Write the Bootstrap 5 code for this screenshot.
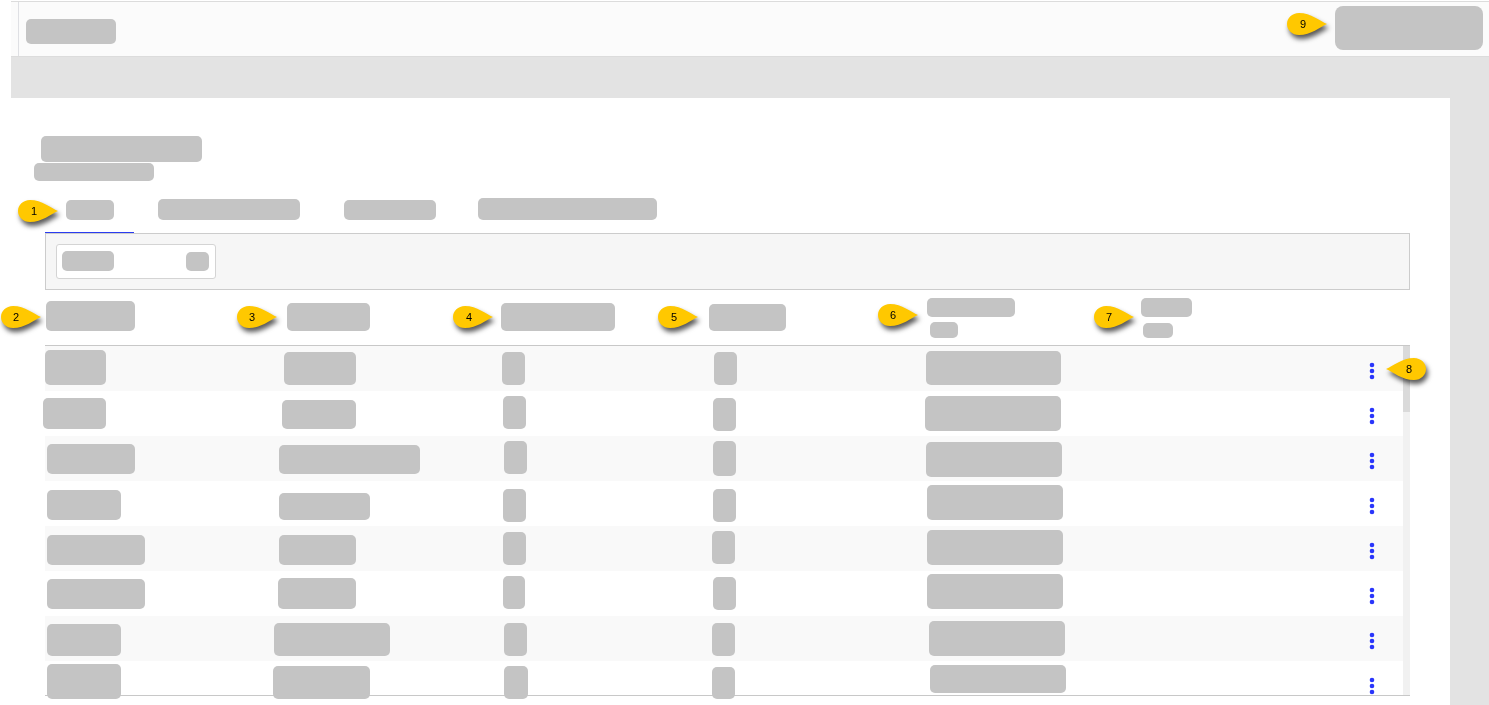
<!DOCTYPE html>
<html lang="en">
<head>
<meta charset="utf-8">
<title>Annotated list page</title>
<link href="https://cdn.jsdelivr.net/npm/bootstrap@5.3.0/dist/css/bootstrap.min.css" rel="stylesheet">
<style>
html,body{height:705px;overflow:hidden;background:#fff}
body{position:relative;padding-top:1px;font-family:"Liberation Sans",Arial,sans-serif}
.shell{margin-left:11px}
.ph{background:#c4c4c4;border-radius:5px;display:block;flex:none}
.topbar{height:56px;background:#fbfbfb;border-top:1px solid #dcdcdc;border-bottom:1px solid #dcdcdc}
.gutter{width:8px;align-self:stretch;border-right:1px solid #dfe0e4}
.brand{width:90px;height:25px;margin:17px 0 0 7px}
.account{width:148px;height:44px;margin:4px 6px 0 auto;border-radius:8px}
.band{height:41px;background:#e3e3e3}
.rail{width:39px;background:#e3e3e3;height:607px}
.sheet{width:1439px;height:607px;padding:38px 40px 0 34px;background:#fff}
.title{width:161px;height:26px;margin-left:-4px}
.subtitle{width:120px;height:18px;margin:1px 0 0 -11px}
.tabstrip{height:52px}
.tabstrip .nav-link{padding:0 0 12px;border-bottom:1px solid transparent}
.tabstrip .active-tab{padding:0 20px 12px 21px;border-bottom-color:#2a3cf0}
.tabstrip .nav-item+.nav-item{margin-left:44px}
.tabstrip .nav-item:nth-child(2){margin-left:24px}
.tabstrip .nav-item:nth-child(4){margin-left:42px}
.t1{width:48px;height:20px}
.t2{width:142px;height:21px}
.t3{width:92px;height:20px}
.t4{width:179px;height:22px}
.filterbar{height:57px;padding:10px;background:#f6f6f6;border:1px solid #ccc}
.filterbox{width:160px;height:35px;background:#fff;border:1px solid #d4d4d4;border-radius:3px}
.f1{width:52px;height:20px;margin:6px 0 0 5px}
.f2{width:23px;height:19px;margin:7px 6px 0 auto}
.headrow{display:grid;grid-template-columns:225px 230px 210px 210px 220px 1fr;height:56px;border-bottom:1px solid #c8c8c8;align-items:start}
.h1{width:89px;height:30px;margin:11px 0 0 1px}
.h2{width:83px;height:28px;margin:13px 0 0 17px}
.h3{width:114px;height:28px;margin:13px 0 0 1px}
.h4{width:77px;height:27px;margin:14px 0 0 -1px}
.h5{width:88px;height:19px;margin:8px 0 0 7px}
.h5s{width:28px;height:16px;margin:5px 0 0 10px}
.h6{width:51px;height:19px;margin:8px 0 0 1px}
.h6s{width:30px;height:15px;margin:6px 0 0 3px}
.bodywrap{height:350px;border-bottom:1px solid #c8c8c8}
.rowsarea{height:349px}
.datarow{display:grid;grid-template-columns:225px 230px 210px 210px 440px 1fr;height:45px;align-items:start}
.datarow:nth-child(odd){background:#f9f9f9}
.scrolltrack{width:7px;height:349px;background:#f1f1f1}
.scrollthumb{height:66px;background:#dadada}
.kebab{display:block;margin:16px 0 0 9px;fill:#2a36fb}
.r1 .c1{margin:4px 0 0 0;width:61px;height:35px}.r1 .c2{margin:6px 0 0 14px;width:72px;height:33px}.r1 .c3{margin:6px 0 0 2px;width:23px;height:33px}.r1 .c4{margin:6px 0 0 4px;width:23px;height:33px}.r1 .c5{margin:5px 0 0 6px;width:135px;height:34px}
.r2 .c1{margin:7px 0 0 -2px;width:63px;height:31px}.r2 .c2{margin:9px 0 0 12px;width:74px;height:29px}.r2 .c3{margin:5px 0 0 3px;width:23px;height:33px}.r2 .c4{margin:7px 0 0 3px;width:23px;height:33px}.r2 .c5{margin:5px 0 0 5px;width:136px;height:35px}
.r3 .c1{margin:8px 0 0 2px;width:88px;height:30px}.r3 .c2{margin:9px 0 0 9px;width:141px;height:29px}.r3 .c3{margin:5px 0 0 4px;width:23px;height:33px}.r3 .c4{margin:5px 0 0 3px;width:23px;height:35px}.r3 .c5{margin:6px 0 0 6px;width:136px;height:35px}
.r4 .c1{margin:9px 0 0 2px;width:74px;height:30px}.r4 .c2{margin:12px 0 0 9px;width:91px;height:27px}.r4 .c3{margin:8px 0 0 3px;width:23px;height:33px}.r4 .c4{margin:8px 0 0 3px;width:23px;height:33px}.r4 .c5{margin:4px 0 0 7px;width:136px;height:35px}
.r5 .c1{margin:9px 0 0 2px;width:98px;height:30px}.r5 .c2{margin:9px 0 0 9px;width:77px;height:30px}.r5 .c3{margin:6px 0 0 3px;width:23px;height:33px}.r5 .c4{margin:5px 0 0 2px;width:23px;height:33px}.r5 .c5{margin:4px 0 0 7px;width:136px;height:35px}
.r6 .c1{margin:8px 0 0 2px;width:98px;height:30px}.r6 .c2{margin:7px 0 0 8px;width:78px;height:31px}.r6 .c3{margin:5px 0 0 3px;width:22px;height:33px}.r6 .c4{margin:6px 0 0 3px;width:23px;height:33px}.r6 .c5{margin:3px 0 0 7px;width:136px;height:35px}
.r7 .c1{margin:8px 0 0 2px;width:74px;height:32px}.r7 .c2{margin:7px 0 0 4px;width:116px;height:33px}.r7 .c3{margin:7px 0 0 4px;width:23px;height:33px}.r7 .c4{margin:7px 0 0 2px;width:23px;height:33px}.r7 .c5{margin:5px 0 0 9px;width:136px;height:35px}
.r8 .c1{margin:3px 0 0 2px;width:74px;height:35px}.r8 .c2{margin:5px 0 0 3px;width:97px;height:33px}.r8 .c3{margin:5px 0 0 4px;width:24px;height:33px}.r8 .c4{margin:6px 0 0 2px;width:23px;height:32px}.r8 .c5{margin:4px 0 0 10px;width:136px;height:28px}
.pin{position:absolute;width:40px;height:22px;overflow:visible;filter:drop-shadow(2px 4px 2.5px rgba(0,0,0,.65))}
.pin path{fill:#ffc800}
.pin text{font:11px "Liberation Sans",Arial,sans-serif;fill:#000;text-anchor:middle}
.p1{left:18px;top:200px}.p2{left:1px;top:306px}.p3{left:237px;top:306px}.p4{left:453px;top:306px}.p5{left:658px;top:306px}.p6{left:878px;top:304px}.p7{left:1094px;top:306px}.p8{left:1386px;top:358px}.p9{left:1287px;top:13px}
</style>
</head>
<body>
<div class="shell">
  <header class="topbar d-flex align-items-start">
    <div class="gutter"></div>
    <span class="ph brand"></span>
    <span class="ph account"></span>
  </header>
  <div class="band"></div>
  <div class="d-flex">
    <main class="sheet">
      <span class="ph title"></span>
      <span class="ph subtitle"></span>
      <ul class="nav tabstrip align-items-end">
        <li class="nav-item"><a class="nav-link active-tab" href="#"><span class="ph t1"></span></a></li>
        <li class="nav-item"><a class="nav-link" href="#"><span class="ph t2"></span></a></li>
        <li class="nav-item"><a class="nav-link" href="#"><span class="ph t3"></span></a></li>
        <li class="nav-item"><a class="nav-link" href="#"><span class="ph t4"></span></a></li>
      </ul>
      <div class="filterbar">
        <div class="filterbox d-flex align-items-start"><span class="ph f1"></span><span class="ph f2"></span></div>
      </div>
      <div class="headrow">
        <div><span class="ph h1"></span></div>
        <div><span class="ph h2"></span></div>
        <div><span class="ph h3"></span></div>
        <div><span class="ph h4"></span></div>
        <div><span class="ph h5"></span><span class="ph h5s"></span></div>
        <div><span class="ph h6"></span><span class="ph h6s"></span></div>
      </div>
      <div class="bodywrap d-flex">
        <div class="rowsarea flex-grow-1">
          <div class="datarow r1"><span class="ph c1"></span><span class="ph c2"></span><span class="ph c3"></span><span class="ph c4"></span><span class="ph c5"></span><svg class="kebab" width="6" height="18" viewBox="0 0 6 18"><circle cx="3" cy="3" r="2.3"/><circle cx="3" cy="9" r="2.3"/><circle cx="3" cy="15" r="2.3"/></svg></div>
          <div class="datarow r2"><span class="ph c1"></span><span class="ph c2"></span><span class="ph c3"></span><span class="ph c4"></span><span class="ph c5"></span><svg class="kebab" width="6" height="18" viewBox="0 0 6 18"><circle cx="3" cy="3" r="2.3"/><circle cx="3" cy="9" r="2.3"/><circle cx="3" cy="15" r="2.3"/></svg></div>
          <div class="datarow r3"><span class="ph c1"></span><span class="ph c2"></span><span class="ph c3"></span><span class="ph c4"></span><span class="ph c5"></span><svg class="kebab" width="6" height="18" viewBox="0 0 6 18"><circle cx="3" cy="3" r="2.3"/><circle cx="3" cy="9" r="2.3"/><circle cx="3" cy="15" r="2.3"/></svg></div>
          <div class="datarow r4"><span class="ph c1"></span><span class="ph c2"></span><span class="ph c3"></span><span class="ph c4"></span><span class="ph c5"></span><svg class="kebab" width="6" height="18" viewBox="0 0 6 18"><circle cx="3" cy="3" r="2.3"/><circle cx="3" cy="9" r="2.3"/><circle cx="3" cy="15" r="2.3"/></svg></div>
          <div class="datarow r5"><span class="ph c1"></span><span class="ph c2"></span><span class="ph c3"></span><span class="ph c4"></span><span class="ph c5"></span><svg class="kebab" width="6" height="18" viewBox="0 0 6 18"><circle cx="3" cy="3" r="2.3"/><circle cx="3" cy="9" r="2.3"/><circle cx="3" cy="15" r="2.3"/></svg></div>
          <div class="datarow r6"><span class="ph c1"></span><span class="ph c2"></span><span class="ph c3"></span><span class="ph c4"></span><span class="ph c5"></span><svg class="kebab" width="6" height="18" viewBox="0 0 6 18"><circle cx="3" cy="3" r="2.3"/><circle cx="3" cy="9" r="2.3"/><circle cx="3" cy="15" r="2.3"/></svg></div>
          <div class="datarow r7"><span class="ph c1"></span><span class="ph c2"></span><span class="ph c3"></span><span class="ph c4"></span><span class="ph c5"></span><svg class="kebab" width="6" height="18" viewBox="0 0 6 18"><circle cx="3" cy="3" r="2.3"/><circle cx="3" cy="9" r="2.3"/><circle cx="3" cy="15" r="2.3"/></svg></div>
          <div class="datarow r8"><span class="ph c1"></span><span class="ph c2"></span><span class="ph c3"></span><span class="ph c4"></span><span class="ph c5"></span><svg class="kebab" width="6" height="18" viewBox="0 0 6 18"><circle cx="3" cy="3" r="2.3"/><circle cx="3" cy="9" r="2.3"/><circle cx="3" cy="15" r="2.3"/></svg></div>
        </div>
        <div class="scrolltrack"><div class="scrollthumb"></div></div>
      </div>
    </main>
    <aside class="rail"></aside>
  </div>
</div>
<svg class="pin p1" viewBox="0 0 40 22"><path d="M40 11C33 8 24 0 12 0 5 0 0 5 0 11s5 11 12 11c12 0 21-8 28-11z"/><text x="16" y="15">1</text></svg>
<svg class="pin p2" viewBox="0 0 40 22"><path d="M40 11C33 8 24 0 12 0 5 0 0 5 0 11s5 11 12 11c12 0 21-8 28-11z"/><text x="15" y="15">2</text></svg>
<svg class="pin p3" viewBox="0 0 40 22"><path d="M40 11C33 8 24 0 12 0 5 0 0 5 0 11s5 11 12 11c12 0 21-8 28-11z"/><text x="15" y="15">3</text></svg>
<svg class="pin p4" viewBox="0 0 40 22"><path d="M40 11C33 8 24 0 12 0 5 0 0 5 0 11s5 11 12 11c12 0 21-8 28-11z"/><text x="16" y="15">4</text></svg>
<svg class="pin p5" viewBox="0 0 40 22"><path d="M40 11C33 8 24 0 12 0 5 0 0 5 0 11s5 11 12 11c12 0 21-8 28-11z"/><text x="16" y="15">5</text></svg>
<svg class="pin p6" viewBox="0 0 40 22"><path d="M40 11C33 8 24 0 12 0 5 0 0 5 0 11s5 11 12 11c12 0 21-8 28-11z"/><text x="15" y="15">6</text></svg>
<svg class="pin p7" viewBox="0 0 40 22"><path d="M40 11C33 8 24 0 12 0 5 0 0 5 0 11s5 11 12 11c12 0 21-8 28-11z"/><text x="15" y="15">7</text></svg>
<svg class="pin p8" viewBox="0 0 40 22"><path d="M0 11C7 8 16 0 28 0c7 0 12 5 12 11s-5 11-12 11C16 22 7 14 0 11z"/><text x="23" y="15">8</text></svg>
<svg class="pin p9" viewBox="0 0 40 22"><path d="M40 11C33 8 24 0 12 0 5 0 0 5 0 11s5 11 12 11c12 0 21-8 28-11z"/><text x="16" y="15">9</text></svg>
<script src="https://cdn.jsdelivr.net/npm/bootstrap@5.3.0/dist/js/bootstrap.bundle.min.js"></script>
</body>
</html>
